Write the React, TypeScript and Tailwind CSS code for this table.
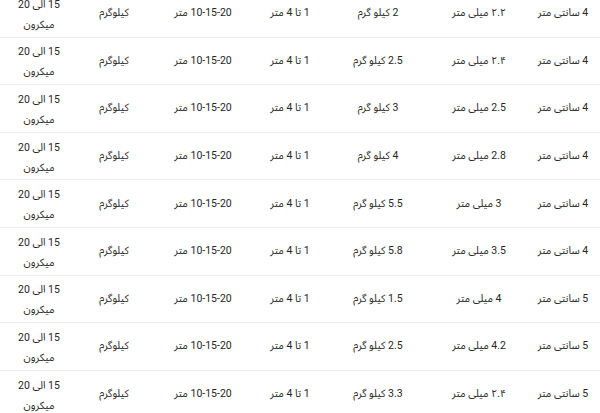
import React from "react";

const rows: string[][] = [
  ["4 سانتی متر", "۲.۲ میلی متر", "2 کیلو گرم"],
  ["4 سانتی متر", "۲.۴ میلی متر", "2.5 کیلو گرم"],
  ["4 سانتی متر", "2.5 میلی متر", "3 کیلو گرم"],
  ["4 سانتی متر", "2.8 میلی متر", "4 کیلو گرم"],
  ["4 سانتی متر", "3 میلی متر", "5.5 کیلو گرم"],
  ["4 سانتی متر", "3.5 میلی متر", "5.8 کیلو گرم"],
  ["5 سانتی متر", "4 میلی متر", "1.5 کیلو گرم"],
  ["5 سانتی متر", "4.2 میلی متر", "2.5 کیلو گرم"],
  ["5 سانتی متر", "۲.۴ میلی متر", "3.3 کیلو گرم"],
];

export default function App() {
  return (
    <div
      dir="rtl"
      className="w-[600px] h-[413px] overflow-hidden bg-white text-[#262626] text-[10.5px] font-['Roboto','Noto_Sans_Arabic','DejaVu_Sans',sans-serif]"
    >
      <div className="-mt-[10px] flex flex-col">
        {rows.map((r, i) => (
          <div
            key={i}
            className="grid grid-cols-[74px_94px_108px_68px_106px_72px_78px] h-[47.6px] border-b border-[#ececec] items-center text-center leading-[20px]"
          >
            <div>{r[0]}</div>
            <div>{r[1]}</div>
            <div>{r[2]}</div>
            <div>1 تا 4 متر</div>
            <div>10-15-20 متر</div>
            <div>کیلوگرم</div>
            <div className="pt-[3px]">
              15 الی 20
              <br />
              میکرون
            </div>
          </div>
        ))}
      </div>
    </div>
  );
}
